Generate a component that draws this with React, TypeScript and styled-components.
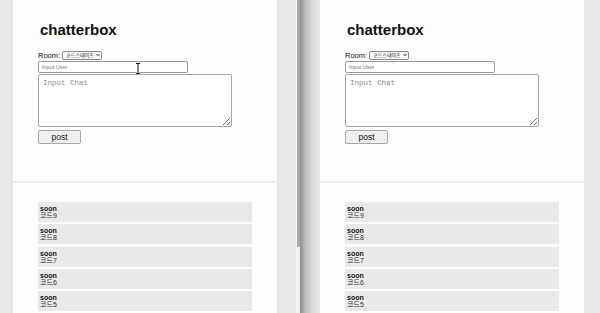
import React from 'react';
import styled, {createGlobalStyle} from 'styled-components';

const GlobalStyle = createGlobalStyle`
    html, body {
        margin: 0;
        padding: 0;
        background: #e8e8e8;
        overflow: hidden;
    }
    body {
        font-family: "Liberation Sans", "Noto Sans CJK KR", Arial, sans-serif;
    }
`;

const Desktop = styled.div`
    display: flex;
    width: 600px;
    height: 313px;
    overflow: hidden;
`;

const Window = styled.div<{$left: number; $right: number; $shadow?: boolean}>`
    position: relative;
    display: flex;
    width: 300px;
    height: 313px;
    box-sizing: border-box;
    padding-left: ${p => p.$left}px;
    padding-right: ${p => p.$right}px;
    background: ${p => p.$shadow
        ? 'linear-gradient(to right, #8c8c8c 0px, #b9b9b9 5px, #dadada 12px, #e8e8e8 20px)'
        : '#e8e8e8'};
`;

const Gutter = styled.div`
    flex: 1;
`;

const ScrollTrack = styled.div`
    width: 4px;
    height: 100%;
    background: #f4f4f4;
    display: flex;
    justify-content: flex-end;
`;

const ScrollThumb = styled.div`
    width: 3px;
    height: 247px;
    background: #a9a9a9;
`;

const Page = styled.div`
    width: 264px;
    height: 100%;
    flex-shrink: 0;
    overflow: hidden;
    background: #fdfdfd;
    display: flex;
    flex-direction: column;
`;

const Top = styled.section`
    flex-shrink: 0;
    height: 181px;
    box-sizing: border-box;
    padding: 0 25px;
`;

const Title = styled.h1`
    margin: 21px 0 0 2px;
    font-size: 15px;
    line-height: 18px;
    font-weight: bold;
    color: #111;
`;

const Form = styled.div`
    margin-top: 11px;
    display: flex;
    flex-direction: column;
    align-items: flex-start;
    gap: 1px;
`;

const RoomRow = styled.label`
    display: flex;
    align-items: center;
    gap: 2px;
    height: 10px;
    font-size: 7.5px;
    color: #111;
`;

const SelectWrap = styled.span`
    position: relative;
    display: inline-flex;
`;

const Select = styled.select`
    appearance: none;
    width: 40px;
    height: 9px;
    box-sizing: border-box;
    margin: 0;
    padding: 0 8px 0 3px;
    border: 1px solid #8a8a8a;
    border-radius: 2px;
    background: #fafafa;
    font-family: "Liberation Sans", "Noto Sans CJK KR", sans-serif;
    font-size: 5px;
    line-height: 7px;
    color: #222;
`;

const Chevron = styled.svg`
    position: absolute;
    right: 2px;
    top: 2.5px;
    width: 4px;
    height: 4px;
    pointer-events: none;
`;

const UserInput = styled.input`
    width: 150px;
    height: 12px;
    box-sizing: border-box;
    margin: 0;
    padding: 0 3px;
    border: 1px solid #9a9a9a;
    border-radius: 2px;
    font-family: "Liberation Sans", sans-serif;
    font-size: 5.5px;
    background: #fff;
    &::placeholder {
        color: #777;
    }
`;

const ChatArea = styled.textarea`
    width: 194px;
    height: 53px;
    box-sizing: border-box;
    margin: 0;
    padding: 4px 4px;
    border: 1px solid #a6a6a6;
    border-radius: 2px;
    font-family: "Liberation Mono", monospace;
    font-size: 7.5px;
    background: #fff;
    &::placeholder {
        color: #8a8a8a;
    }
`;

const PostButton = styled.button`
    margin-top: 2px;
    width: 43px;
    height: 14px;
    box-sizing: border-box;
    padding: 0;
    border: 1px solid #a8a8a8;
    border-radius: 2px;
    background: #efefef;
    font-family: "Liberation Sans", sans-serif;
    font-size: 8.5px;
    line-height: 12px;
    color: #111;
`;

const Divider = styled.hr`
    flex-shrink: 0;
    margin: 0;
    border: none;
    height: 2px;
    background: #efefef;
`;

const List = styled.ul`
    flex-shrink: 0;
    list-style: none;
    margin: 0;
    padding: 19px 25px 0;
    display: flex;
    flex-direction: column;
    gap: 2.25px;
`;

const Item = styled.li`
    flex-shrink: 0;
    height: 20px;
    box-sizing: border-box;
    padding: 3px 2px 0;
    background: #e9e9e9;
    font-family: "Liberation Sans", "Noto Sans CJK KR", sans-serif;
    font-size: 7px;
    line-height: 7px;
`;

const Name = styled.div`
    font-weight: bold;
    color: #111;
`;

const Message = styled.div`
    color: #333;
`;

const Cursor = styled.svg`
    position: absolute;
    left: 135px;
    top: 63px;
    width: 6px;
    height: 11px;
`;

const messages = ['코드9', '코드8', '코드7', '코드6', '코드5'];

const ChatPage = () => (
    <Page>
        <Top>
            <Title>chatterbox</Title>
            <Form>
                <RoomRow>
                    Room:
                    <SelectWrap>
                        <Select defaultValue="codestates">
                            <option value="codestates">코드스테이츠</option>
                        </Select>
                        <Chevron viewBox="0 0 4 4">
                            <path d="M0.4 1 L2 2.8 L3.6 1" fill="none" stroke="#222" strokeWidth="0.9"/>
                        </Chevron>
                    </SelectWrap>
                </RoomRow>
                <UserInput placeholder="Input User"/>
                <ChatArea placeholder="Input Chat"/>
                <PostButton>post</PostButton>
            </Form>
        </Top>
        <Divider/>
        <List>
            {messages.map(m => (
                <Item key={m}>
                    <Name>soon</Name>
                    <Message>{m}</Message>
                </Item>
            ))}
        </List>
    </Page>
);

export default function App() {
    return (
        <Desktop>
            <GlobalStyle/>
            <Window $left={13} $right={0}>
                <ChatPage/>
                <Gutter/>
                <ScrollTrack>
                    <ScrollThumb/>
                </ScrollTrack>
                <Cursor viewBox="0 0 6 11">
                    <path d="M1 0.5 H5 M3 0.5 V10.5 M1 10.5 H5" stroke="#fff" strokeWidth="2.2" fill="none"/>
                    <path d="M1 0.5 H5 M3 0.5 V10.5 M1 10.5 H5" stroke="#111" strokeWidth="1" fill="none"/>
                </Cursor>
            </Window>
            <Window $left={20} $right={16} $shadow>
                <ChatPage/>
            </Window>
        </Desktop>
    );
}
